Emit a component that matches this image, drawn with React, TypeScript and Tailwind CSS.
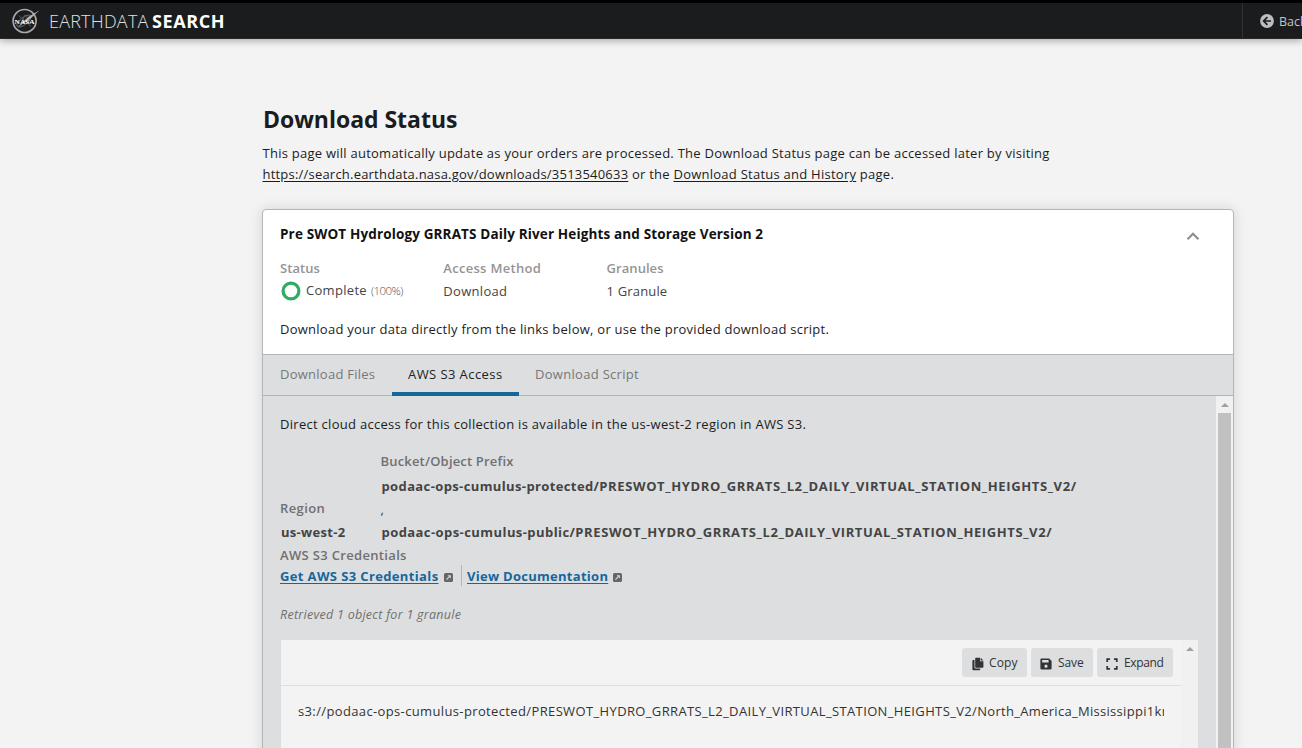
import type { ReactNode } from 'react'

function NasaLogo() {
  return (
    <svg viewBox="0 0 28 26" className="h-[26px] w-[28px]" fill="none">
      <circle cx="12.6" cy="13" r="11.500" stroke="#a8a8a8" strokeWidth="1.700" />
      <ellipse cx="12" cy="13" rx="8.6" ry="3.6" transform="rotate(-38 12 13)" stroke="#707070" strokeWidth="0.9" />
      <path d="M6.5 7.5L19 18.500M8 19L13 7l6 8" stroke="#606060" strokeWidth="0.9" />
      <path d="M27.500 2.200L16.500 8.800 5.500 19 17.500 11.500z" fill="#b4b4b4" />
      <text x="12.600" y="15.500" textAnchor="middle" fontFamily="Liberation Serif, serif" fontWeight="700" fontSize="6.600" textLength="20" lengthAdjust="spacingAndGlyphs" fill="#fff">NASA</text>
    </svg>
  )
}

function BackIcon() {
  return (
    <svg viewBox="0 0 14 14" className="h-[14px] w-[14px] shrink-0">
      <circle cx="7" cy="7" r="6.9" fill="#bdbdbd" />
      <path d="M7.4 3.2L3.6 7l3.8 3.8M3.8 7h7.2" stroke="#1b1c1e" strokeWidth="1.7" fill="none" />
    </svg>
  )
}

function ExternalIcon() {
  return (
    <svg viewBox="0 0 10 10" className="mt-[3px] h-[9px] w-[9px] shrink-0">
      <rect width="10" height="10" rx="1.8" fill="#666" />
      <path d="M2.700 7.300L6.200 3.800" stroke="#dcdee0" strokeWidth="1.200" fill="none" />
      <path d="M4 2.400h3.600V6z" fill="#dcdee0" />
    </svg>
  )
}

function CopyIcon() {
  return (
    <svg viewBox="0 0 12 14" className="h-[14px] w-[12px]">
      <path d="M4 .8h4v3.400h3.400V10a.8.8 0 0 1-.8.8H4a.8.8 0 0 1-.8-.8V1.600A.8.8 0 0 1 4 .8z" fill="#333" />
      <path d="M8.700.8l2.700 2.700H8.700z" fill="#333" />
      <path d="M2.500 3H1.200a.8.8 0 0 0-.8.8v8.600c0 .5.3.8.8.8h6.200a.8.8 0 0 0 .8-.8v-.9H3.800a1.300 1.300 0 0 1-1.300-1.300z" fill="#333" />
    </svg>
  )
}

function SaveIcon() {
  return (
    <svg viewBox="0 0 12 12" className="h-[12px] w-[12px]">
      <path fillRule="evenodd" d="M1.5.4h7.6l2.5 2.5v7.3a1.4 1.4 0 0 1-1.4 1.4H1.8A1.4 1.4 0 0 1 .4 10.200V1.500A1.100 1.100 0 0 1 1.500.4zM2.200 2v2.600h6.400V2zM6 6.600a1.600 1.600 0 1 0 0 3.200 1.600 1.600 0 0 0 0-3.200z" fill="#333" />
    </svg>
  )
}

function ExpandIcon() {
  return (
    <svg viewBox="0 0 12 12" className="h-[12px] w-[12px]" fill="none" stroke="#333" strokeWidth="1.7">
      <path d="M1.200 4V1.200H4M8 1.200h2.800V4M10.800 8v2.800H8M4 10.800H1.200V8" />
    </svg>
  )
}

function UpTriangle() {
  return (
    <svg viewBox="0 0 8 4" className="h-[4px] w-[8px]">
      <path d="M4 0l4 4H0z" fill="#a0a0a0" />
    </svg>
  )
}

function Fact({ label, children, labelClass }: { label: string; children: ReactNode; labelClass: string }) {
  return (
    <div className="w-[163.3px]">
      <div className={`h-[21px] font-semibold leading-[21px] text-[#949494] ${labelClass}`}>{label}</div>
      {children}
    </div>
  )
}

function ToolButton({ className, icon, children }: { className: string; icon: ReactNode; children: ReactNode }) {
  return (
    <button className={`flex h-[29px] items-center rounded-[3px] bg-[#dcdee0] text-[12px] text-[#333] ${className}`}>
      <span className="mt-[3px]">{icon}</span>
      {children}
    </button>
  )
}

export default function App() {
  return (
    <div className="flex h-[748px] w-[1302px] flex-col overflow-hidden whitespace-nowrap bg-[#f3f3f3] font-['Open_Sans',sans-serif] text-[13px] text-[#1b1c1e]">
      <header className="z-10 flex h-[39px] shrink-0 border-t-[3px] border-b border-t-black border-b-[#2c2828] bg-[#1b1c1e] shadow-[0_2px_7px_rgba(0,0,0,0.3)]">
        <div className="flex flex-1 items-center pl-[12px]">
          <NasaLogo />
          <span className="ml-[9px] w-[103px] text-[18px] font-light leading-[24px] tracking-[0.220px] text-[#e0e0e0]">EARTHDATA</span>
          <span className="text-[18px] font-bold leading-[24px] tracking-[0.6px] text-white">SEARCH</span>
        </div>
        <div className="flex w-[60px] items-center gap-[5px] overflow-hidden border-l border-[#303133] pl-[17px] text-[12.500px] text-[#c4c4c4]">
          <BackIcon />
          <span className="pt-[3px]">Back to Search</span>
        </div>
      </header>

      <main className="flex min-h-0 flex-1 flex-col pl-[262px]">
        <h1 className="mt-[63px] h-[34px] pl-px text-[23px] font-bold leading-[34px] tracking-[-0.030px]">Download Status</h1>
        <p className="mt-[7px] pl-[0.5px] leading-[21px]">
          <span className="block tracking-[0.250px]">This page will automatically update as your orders are processed. The Download Status page can be accessed later by visiting</span>
          <span className="block tracking-[0.250px]">
            <a className="tracking-[0.210px] underline underline-offset-2">https://search.earthdata.nasa.gov/downloads/3513540633</a> or the{' '}
            <a className="underline underline-offset-2">Download Status and History</a> page.
          </span>
        </p>

        <section className="mt-[24px] flex h-[560px] w-[972px] shrink-0 flex-col rounded-t-[4px] border border-[#b4b5b8] bg-white shadow-[0_0_14px_rgba(0,0,0,0.13)]">
          <div className="flex h-[144px] shrink-0 flex-col pl-[17px]">
            <div className="mt-[14px] flex h-[21px] items-center justify-between pr-[33px]">
              <h2 className="text-[13.5px] font-bold leading-[21px] tracking-[0.140px] text-[#111]">Pre SWOT Hydrology GRRATS Daily River Heights and Storage Version 2</h2>
              <svg viewBox="0 0 14 9" className="mt-[3px] h-[9px] w-[14px]" fill="none" stroke="#8f8f8f" strokeWidth="2.200">
                <path d="M1.500 7.200L7 1.700l5.500 5.500" />
              </svg>
            </div>
            <div className="mt-[13px] flex h-[44px]">
              <Fact label="Status" labelClass="tracking-[0.050px]">
                <div className="flex h-[23px] items-center">
                  <svg viewBox="0 0 20 20" className="ml-[1px] mt-[1px] size-[20px]">
                    <circle cx="10" cy="10" r="7.900" fill="none" stroke="#2eac62" strokeWidth="3.200" />
                  </svg>
                  <span className="ml-[5px] w-[65px] tracking-[0.3px] text-[#444]">Complete</span>
                  <span className="text-[11.500px] font-light tracking-[-0.550px] text-[#555]">(100%)</span>
                </div>
              </Fact>
              <Fact label="Access Method" labelClass="tracking-[0.3px]">
                <div className="mt-[2px] h-[21px] leading-[21px] tracking-[0.3px] text-[#444]">Download</div>
              </Fact>
              <Fact label="Granules" labelClass="tracking-[0.050px]">
                <div className="mt-[2px] h-[21px] leading-[21px] tracking-[0.150px] text-[#444]">1 Granule</div>
              </Fact>
            </div>
            <p className="mt-[17px] leading-[21px] tracking-[0.255px]">Download your data directly from the links below, or use the provided download script.</p>
          </div>

          <nav className="flex h-[42px] shrink-0 border-y border-[#b4b5b8] bg-[#dcdee0] leading-[38px] text-[#777]">
            <span className="w-[129px] pl-[17px] tracking-[0.250px]">Download Files</span>
            <span className="-mb-px h-[41px] w-[127px] border-b-4 border-[#17669a] pl-[16px] tracking-[0.420px] text-[#222]">AWS S3 Access</span>
            <span className="pl-[16px] tracking-[0.3px]">Download Script</span>
          </nav>

          <div className="flex min-h-0 flex-1 bg-[#dcdee0]">
            <div className="flex w-[953px] flex-col pl-[17px]">
              <p className="mt-[18px] h-[21px] leading-[21px] tracking-[0.290px]">Direct cloud access for this collection is available in the us-west-2 region in AWS S3.</p>
              <div className="mt-[14px] flex h-[96px] leading-[24px]">
                <div className="flex w-[100.500px] flex-col pt-[47px]">
                  <div className="h-[24px] font-semibold tracking-[0.4px] text-[#707070]">Region</div>
                  <div className="h-[24px] pl-px font-bold tracking-[0.3px] text-[#444]">us-west-2</div>
                </div>
                <div>
                  <div className="h-[25px] font-semibold tracking-[0.180px] text-[#707070]">Bucket/Object Prefix</div>
                  <div className="h-[23px] pl-px font-bold tracking-[0.610px] text-[#444]">
                    <span className="tracking-[0.380px]">podaac-ops-cumulus-protected/</span>PRESWOT_HYDRO_GRRATS_L2_DAILY_VIRTUAL_STATION_HEIGHTS_V2/
                  </div>
                  <div className="h-[23px] text-[#444]">,</div>
                  <div className="h-[24px] pl-px font-bold tracking-[0.600px] text-[#444]">
                    <span className="tracking-[0.430px]">podaac-ops-cumulus-public/</span>PRESWOT_HYDRO_GRRATS_L2_DAILY_VIRTUAL_STATION_HEIGHTS_V2/
                  </div>
                </div>
              </div>
              <div className="h-[20px] font-semibold leading-[20px] tracking-[0.330px] text-[#707070]">AWS S3 Credentials</div>
              <div className="flex h-[21px] items-center font-bold leading-[21px] text-[#17669a]">
                <a className="w-[164px] pt-[2px] tracking-[0.370px] underline underline-offset-2">Get AWS S3 Credentials</a>
                <ExternalIcon />
                <span className="ml-[8px] mr-[5px] h-[21px] w-px bg-[#b4b5b8]" />
                <a className="w-[146px] pt-[2px] tracking-[0.280px] underline underline-offset-2">View Documentation</a>
                <ExternalIcon />
              </div>
              <p className="mt-[18px] h-[21px] text-[12.500px] italic leading-[21px] tracking-[0.270px] text-[#707070]">Retrieved 1 object for 1 granule</p>

              <div className="ml-px mt-[15px] flex w-[917px] flex-1 bg-[#f3f3f3]">
                <div className="w-[900px]">
                  <div className="flex h-[46px] items-start justify-end gap-[4px] border-b border-[#dcdee0] pr-[8px] pt-[8px]">
                    <ToolButton className="w-[65px] gap-[5px] pl-[10px] tracking-[0.150px]" icon={<CopyIcon />}>Copy</ToolButton>
                    <ToolButton className="w-[62px] gap-[6px] pl-[9px] tracking-[-0.100px]" icon={<SaveIcon />}>Save</ToolButton>
                    <ToolButton className="w-[76px] gap-[6px] pl-[9px] tracking-[-0.350px]" icon={<ExpandIcon />}>Expand</ToolButton>
                  </div>
                  <div className="mt-[15px] ml-[17px] w-[866px] overflow-hidden leading-[21px] tracking-[0.300px] text-[#333]">
                    <span className="tracking-[0.365px]">s3://podaac-ops-cumulus-protected/PRESWOT_HYDRO_GRRATS_L2_DAILY_VIRTUAL_STATION_HEIGHTS_V2/</span>North_America_Mississippi1km.nc
                  </div>
                </div>
                <div className="flex w-[17px] flex-col items-center bg-[#f1f1f1] pt-[7px]">
                  <UpTriangle />
                </div>
              </div>
            </div>
            <div className="flex w-[17px] flex-col items-center bg-[#f1f1f1] pt-[7px]">
              <UpTriangle />
              <div className="mt-[6px] w-[13px] flex-1 bg-[#c1c1c1]" />
            </div>
          </div>
        </section>
      </main>
    </div>
  )
}
